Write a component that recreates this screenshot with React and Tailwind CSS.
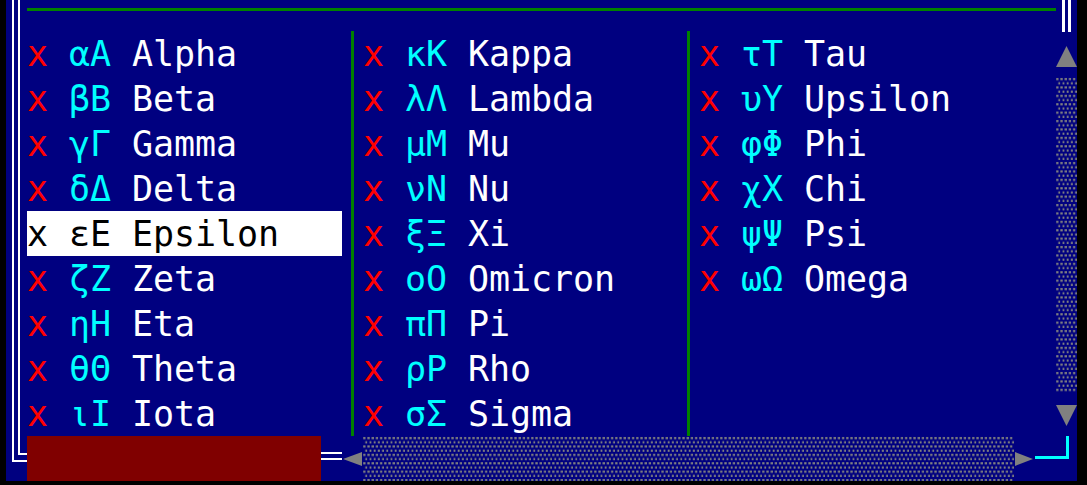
import React from "react";

const columns = [
  [
    ["αΑ", "Alpha"],
    ["βΒ", "Beta"],
    ["γΓ", "Gamma"],
    ["δΔ", "Delta"],
    ["εΕ", "Epsilon"],
    ["ζΖ", "Zeta"],
    ["ηΗ", "Eta"],
    ["θΘ", "Theta"],
    ["ιΙ", "Iota"],
  ],
  [
    ["κΚ", "Kappa"],
    ["λΛ", "Lambda"],
    ["μΜ", "Mu"],
    ["νΝ", "Nu"],
    ["ξΞ", "Xi"],
    ["οΟ", "Omicron"],
    ["πΠ", "Pi"],
    ["ρΡ", "Rho"],
    ["σΣ", "Sigma"],
  ],
  [
    ["τΤ", "Tau"],
    ["υΥ", "Upsilon"],
    ["φΦ", "Phi"],
    ["χΧ", "Chi"],
    ["ψΨ", "Psi"],
    ["ωΩ", "Omega"],
  ],
];

const selected = "Epsilon";

function Shade({ id, width, height }) {
  return (
    <svg width={width} height={height} className="block">
      <defs>
        <pattern id={id} width="4.2" height="8.4" patternUnits="userSpaceOnUse">
          <rect x="0.2" y="1" width="2.3" height="2.2" fill="#808080" />
          <rect x="2.3" y="5.2" width="2.3" height="2.2" fill="#808080" />
        </pattern>
      </defs>
      <rect width={width} height={height} fill={`url(#${id})`} />
    </svg>
  );
}

function Triangle({ dir, w, h }) {
  const pts = {
    up: `0,${h} ${w / 2},0 ${w},${h}`,
    down: `0,0 ${w},0 ${w / 2},${h}`,
    left: `${w},0 0,${h / 2} ${w},${h}`,
    right: `0,0 ${w},${h / 2} 0,${h}`,
  }[dir];
  return (
    <svg width={w} height={h} className="block">
      <polygon points={pts} fill="#808080" />
    </svg>
  );
}

function Entry({ greek, name }) {
  const isSel = name === selected;
  if (isSel) {
    return (
      <div className="h-[45px] w-[315px] pt-[2px] bg-white text-black whitespace-pre">
        {`x ${greek} ${name}`}
      </div>
    );
  }
  return (
    <div className="h-[45px] w-[315px] pt-[2px] whitespace-pre">
      <span className="text-[#ff0000]">x</span>{" "}
      <span className="text-[#00ffff]">{greek}</span>{" "}
      <span className="text-white">{name}</span>
    </div>
  );
}

function Separator() {
  return (
    <div className="w-[21px] shrink-0">
      <div className="ml-[9px] w-[3px] h-full bg-[#008000]" />
    </div>
  );
}

export default function App() {
  return (
    <div className="w-[1087px] h-[485px] bg-black overflow-hidden font-['DejaVu_Sans_Mono',monospace] text-[35px] leading-[43px] tracking-[-0.07px]">
      <div className="ml-[6px] w-[1071px] h-[481px] bg-[#000080] flex overflow-hidden">
        {/* left frame */}
        <div className="w-[21px] shrink-0">
          <div className="ml-[6px] h-[462px] border-l-2 border-b-2 border-white pl-[4px]">
            <div className="h-[455px] border-l-2 border-b-2 border-white" />
          </div>
        </div>

        {/* content */}
        <div className="w-[1029px] shrink-0 flex flex-col">
          <div className="h-[32px] pt-[8px]">
            <div className="h-[3px] bg-[#008000]" />
          </div>
          <div className="h-[405px] flex">
            <div className="w-[315px] shrink-0">
              {columns[0].map(([g, n]) => (
                <Entry key={n} greek={g} name={n} />
              ))}
            </div>
            <Separator />
            <div className="w-[315px] shrink-0">
              {columns[1].map(([g, n]) => (
                <Entry key={n} greek={g} name={n} />
              ))}
            </div>
            <Separator />
            <div className="w-[315px] shrink-0">
              {columns[2].map(([g, n]) => (
                <Entry key={n} greek={g} name={n} />
              ))}
            </div>
          </div>
          <div className="h-[45px] flex">
            <div className="w-[294px] h-full bg-[#800000] shrink-0" />
            <div className="w-[21px] shrink-0 pt-[16px]">
              <div className="h-[8px] border-y-2 border-white" />
            </div>
            <div className="w-[21px] shrink-0 pt-[16px] pl-[1px]">
              <Triangle dir="left" w={19} h={14} />
            </div>
            <div className="w-[651px] shrink-0">
              <Shade id="hshade" width={651} height={45} />
            </div>
            <div className="w-[21px] shrink-0 pt-[16px] pl-[1px]">
              <Triangle dir="right" w={18} h={14} />
            </div>
            <div className="w-[21px] shrink-0 pt-[20px]">
              <div className="h-[3px] bg-[#00ffff]" />
            </div>
          </div>
        </div>

        {/* right frame / vertical scrollbar */}
        <div className="w-[21px] shrink-0 flex flex-col">
          <div className="h-[32px] flex pl-[6px] gap-[3px]">
            <div className="w-[3px] h-full bg-white" />
            <div className="w-[3px] h-full bg-white" />
          </div>
          <div className="h-[45px] pt-[14px]">
            <Triangle dir="up" w={21} h={21} />
          </div>
          <div className="h-[315px]">
            <Shade id="vshade" width={21} height={315} />
          </div>
          <div className="h-[45px] pt-[13px]">
            <Triangle dir="down" w={21} h={21} />
          </div>
          <div className="h-[45px]">
            <div className="w-[13px] h-[23px] border-r-[3px] border-b-[3px] border-[#00ffff]" />
          </div>
        </div>
      </div>
    </div>
  );
}
